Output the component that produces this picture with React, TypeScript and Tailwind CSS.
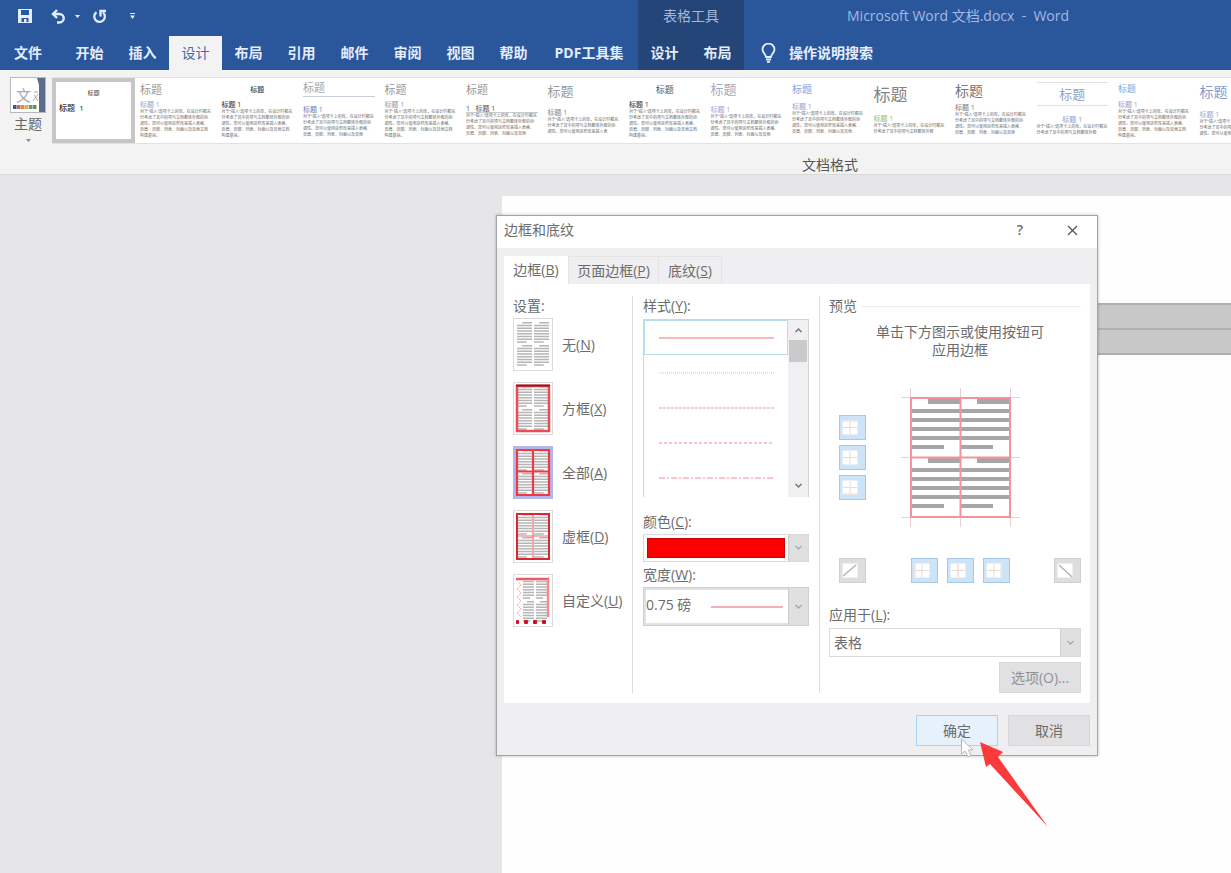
import type { ReactNode } from 'react';

const font = "font-['Open_Sans','Noto_Sans_CJK_SC',sans-serif]";

const BODY =
  '对于“插入”选项卡上的库，在设计时都充分考虑了其中的项与文档整体外观的协调性。您可以使用这些库来插入表格、页眉、页脚、列表、封面以及其他文档构建基块。';

type Style = { title: string; heading: string; label?: string; lines: number };

const STYLES: Style[] = [
  { title: 'h-[22px] text-[11px] text-[#999]', heading: 'text-[#8fa5d1]', lines: 5 },
  { title: 'h-[22px] text-[7px] text-[#444] justify-center font-medium', heading: 'text-[#444] font-medium', lines: 5 },
  { title: 'h-[19px] text-[11px] text-[#a5a5a5] border-b border-[#c9cede] mb-2', heading: 'text-[#5f80be]', lines: 4 },
  { title: 'h-[22px] text-[11px] text-[#999]', heading: 'text-[#999]', lines: 5 },
  { title: 'h-[22px] text-[11px] text-[#999] mb-1', heading: 'text-[#555] border-b border-[#ccc]', label: '1   标题 1', lines: 4 },
  { title: 'h-[26px] text-[13px] text-[#999] mb-1', heading: 'text-[#888]', lines: 3 },
  { title: 'h-[22px] text-[9px] text-[#555] justify-center', heading: 'text-[#444] font-medium', lines: 5 },
  { title: 'h-[22px] text-[13px] text-[#a5aabd] mb-[5px]', heading: 'text-[#a9a0d1]', lines: 4 },
  { title: 'h-[22px] text-[10px] text-[#7fa4e2] mb-[2px]', heading: 'text-[#9c9cd0]', lines: 4 },
  { title: 'h-[32px] text-[17px] text-[#858585] mb-1', heading: 'text-[#8fc173]', lines: 2 },
  { title: 'h-[25px] text-[14px] text-[#777]', heading: 'text-[#777]', lines: 4 },
  { title: 'h-[24px] text-[13px] text-[#979fc4] justify-center mt-1 mb-[9px] border-y border-[#e2e2e2]', heading: 'text-[#979cd0] justify-center', lines: 2 },
  { title: 'h-[20px] text-[9px] text-[#7fa4d4] mb-[2px]', heading: 'text-[#9c9cd0]', lines: 5 },
  { title: 'h-[28px] text-[14px] text-[#8a9acb] mb-1', heading: 'text-[#9cabd0]', lines: 3 },
];

function StyleThumb({ title, heading, label, lines }: Style) {
  return (
    <button className="flex h-[65px] flex-col px-[5px] text-left">
      <span className={`flex w-full items-center leading-none ${title}`}>标题</span>
      <span className={`flex h-[9px] w-full items-center text-[7px] leading-none whitespace-pre ${heading}`}>{label ?? '标题 1'}</span>
      <span className="text-[4px] leading-[6px] text-[#666]">{BODY.slice(0, lines * 17)}</span>
    </button>
  );
}

function Tab({ children, active }: { children: ReactNode; active?: boolean }) {
  return (
    <button
      className={`h-[34px] w-[53px] shrink-0 text-center text-sm ${active ? 'bg-[#f3f3f4] text-[#4a67a8]' : 'font-bold text-[#e4edfb]'}`}
    >
      {children}
    </button>
  );
}

function Chevron({ up }: { up?: boolean }) {
  return (
    <svg width="9" height="6" viewBox="0 0 9 6" className={up ? 'rotate-180' : ''} fill="none" stroke="currentColor" strokeWidth="1.5">
      <path d="M1.500 1l3 3 3-3" />
    </svg>
  );
}

/* Grey text lines of a page with two columns and two blocks. */
function PageLines({ x = 4, w = 32, color = '#b5b5b5' }: { x?: number; w?: number; color?: string }) {
  const half = w / 2 - 1;
  const lines: ReactNode[] = [];
  [4, 27].forEach((top) => {
    for (let i = 0; i < 8; i++) {
      const y = top + i * 2.75;
      [x, x + half + 2].forEach((cx) => {
        const start = i === 0 ? cx + half * 0.35 : cx;
        const len = i === 0 || i === 7 ? half * 0.65 : half;
        lines.push(<rect key={`${y}-${cx}`} x={start} y={y} width={len} height="1.5" fill={color} />);
      });
    }
  });
  return <>{lines}</>;
}

type Kind = 'none' | 'box' | 'all' | 'grid' | 'custom';

function SettingIcon({ kind }: { kind: Kind }) {
  return (
    <svg width="40" height="53" viewBox="0 0 40 53">
      <rect x="0.5" y="0.5" width="39" height="52" fill="#fff" stroke="#dcdada" />
      {kind === 'all' && <rect x="1.5" y="1.5" width="37" height="50" fill="#fff" stroke="#b4b6e8" strokeWidth="3" />}
      {kind === 'custom' ? <PageLines x={10} w={24} /> : <PageLines />}
      {kind === 'box' && <rect x="4" y="4" width="32" height="45" fill="none" stroke="#ee4a55" strokeWidth="2.5" />}
      {kind === 'box' && <path d="M3 3.500h34" stroke="#8f1720" strokeWidth="2" />}
      {kind === 'all' && (
        <path d="M4 4h32v45H4zM20 4v45M4 25.500h32" fill="none" stroke="#ee3a47" strokeWidth="2.200" />
      )}
      {kind === 'grid' && (
        <>
          <path d="M20 4v45M4 26h32" stroke="#f26a72" strokeWidth="1.200" />
          <rect x="4" y="4" width="32" height="45" fill="none" stroke="#d92733" strokeWidth="2" />
        </>
      )}
      {kind === 'custom' && (
        <>
          <path d="M3 5h33" stroke="#ee5a64" strokeWidth="2.500" />
          <path d="M35 5v38" stroke="#f58a90" strokeWidth="2.500" />
          <path d="M4 7l4 4-4 4 4 4-4 4 4 4-4 4 4 4-4 4 4 4" fill="none" stroke="#f9bcc0" />
          {[3, 11, 20, 29].map((x) => (
            <rect key={x} x={x} y="46" width={x === 3 ? 3 : 4} height="4" rx="1" fill="#cf1020" />
          ))}
        </>
      )}
    </svg>
  );
}

const SETTINGS: { kind: Kind; name: string; key: string }[] = [
  { kind: 'none', name: '无', key: 'N' },
  { kind: 'box', name: '方框', key: 'X' },
  { kind: 'all', name: '全部', key: 'A' },
  { kind: 'grid', name: '虚框', key: 'D' },
  { kind: 'custom', name: '自定义', key: 'U' },
];

const LINES = [
  { name: '实线', dash: '', color: '#f8b9bd' },
  { name: '圆点', dash: '1 1', color: '#fbd8da' },
  { name: '短划线', dash: '3 1', color: '#fac9cc' },
  { name: '划线', dash: '3 2', color: '#fac4c8' },
  { name: '点划线', dash: '6 2 2 2', color: '#fac4c8' },
];

type Edge = 'top' | 'middle' | 'bottom' | 'left' | 'center' | 'right' | 'up' | 'down';

const EDGES: Record<Edge, string> = {
  top: 'M4 6h14',
  middle: 'M4 12.500h14',
  bottom: 'M4 19h14',
  left: 'M4 6v13',
  center: 'M11 6v13',
  right: 'M18 6v13',
  up: 'M4 18L17 7',
  down: 'M5 7l13 12',
};

function EdgeButton({ edge, name }: { edge: Edge; name: string }) {
  const off = edge === 'up' || edge === 'down';
  return (
    <button
      aria-label={name}
      disabled={off}
      className={`h-[25px] w-[27px] border ${off ? 'border-[#d0d0d0] bg-[#dedede]' : 'border-[#a9c8e6] bg-[#cce3f8]'}`}
    >
      <svg width="25" height="23" viewBox="1 1 25 23">
        <rect x="3.500" y="5.500" width="15" height="14" fill="#fff" />
        {off ? (
          <path d={EDGES[edge]} stroke="#b5b5b5" strokeWidth="1.500" />
        ) : (
          <>
            <path d="M11 6v13M4 12.500h14" stroke="#e6dcd8" />
            <path d={EDGES[edge]} stroke="#f8d6cf" />
          </>
        )}
      </svg>
    </button>
  );
}

function Preview() {
  return (
    <svg width="120" height="140" viewBox="0 0 120 140" role="img" aria-label="边框预览">
      <path d="M10.500 1v139M60.500 1v139M110.500 1v139M1 10.500h119M1 70.500h119M1 130.500h119" stroke="#e6cfd5" />
      <path d="M12 13h97v116H12z" fill="#fff" />
      {[0, 59].map((top) =>
        [12, 61].map((x) => (
          <g key={`${top}-${x}`} fill="#a6a6a6">
            <rect x={x + 16} y={12 + top} width="32" height="5" />
            {[22, 31, 40, 49].map((y) => (
              <rect key={y} x={x} y={y + top} width="48" height="4" />
            ))}
            <rect x={x} y={58 + top} width="32" height="4" />
          </g>
        )),
      )}
      <path d="M11 11h99v119H11zM60.500 11v119M11 70.500h99" fill="none" stroke="#f3939a" strokeWidth="2" />
    </svg>
  );
}

function Dialog() {
  return (
    <section
      role="dialog"
      aria-labelledby="dialog-title"
      className="absolute top-10 left-[496px] w-[602px] border border-[#a3a3a5] bg-[#efeef0] text-sm leading-5 text-[#6c6c6c] shadow-[0_0_3px_rgba(0,0,0,0.25)]"
    >
      <header className="flex h-8 items-center bg-white pb-1 pl-[7px]">
        <h1 id="dialog-title" className="flex-1">边框和底纹</h1>
        <button aria-label="帮助" className="w-[46px] font-semibold">?</button>
        <button aria-label="关闭" className="ml-1 flex h-7 w-[50px] items-center justify-center">
          <svg width="11" height="11" viewBox="0 0 11 11" stroke="#555" strokeWidth="1.300">
            <path d="M1 1l9 9M10 1l-9 9" />
          </svg>
        </button>
      </header>

      <div className="px-[7px] pt-2">
        <div role="tablist" className="flex">
          <button role="tab" aria-selected="true" className="h-7 w-16 bg-white">边框(<u>B</u>)</button>
          <button role="tab" aria-selected="false" className="h-7 w-[91px] border border-b-0 border-[#e4e3e5]">页面边框(<u>P</u>)</button>
          <button role="tab" aria-selected="false" className="h-7 w-[63px] border border-b-0 border-l-0 border-[#e4e3e5]">底纹(<u>S</u>)</button>
        </div>

        <div className="flex bg-white px-[9px] pt-3 pb-[10px]">
          <fieldset className="w-[120px] border-r border-[#dcdcdc]">
            <legend className="float-left mb-[2px] w-full">设置:</legend>
            <div className="clear-both flex flex-col gap-[11px]">
              {SETTINGS.map((s) => (
                <label key={s.kind} className="flex items-center gap-[9px]">
                  <input type="radio" name="setting" defaultChecked={s.kind === 'all'} className="sr-only" />
                  <SettingIcon kind={s.kind} />
                  <span>{s.name}(<u>{s.key}</u>)</span>
                </label>
              ))}
            </div>
          </fieldset>

          <div className="w-[187px] border-r border-[#dcdcdc] px-[10px]">
            <div id="style-label">样式(<u>Y</u>):</div>
            <div className="mt-[3px] flex h-[178px] border border-b-0 border-[#d4d4d6]">
              <div role="listbox" aria-labelledby="style-label" className="flex flex-1 flex-col">
                {LINES.map((l, i) => (
                  <button
                    key={l.name}
                    role="option"
                    aria-label={l.name}
                    aria-selected={i === 0}
                    className={`flex h-[35px] items-center justify-center border ${i === 0 ? 'border-[#b9dcee]' : 'border-transparent'}`}
                  >
                    <svg width="115" height="2">
                      <path d="M0 1h115" stroke={l.color} strokeWidth="2" strokeDasharray={l.dash} />
                    </svg>
                  </button>
                ))}
              </div>
              <div className="flex w-5 flex-col items-center bg-[#f0eff1] text-[#777]">
                <button aria-label="向上滚动" className="flex h-5 w-full items-center justify-center"><Chevron up /></button>
                <div className="h-[22px] w-[18px] bg-[#cacaca]" />
                <button aria-label="向下滚动" className="mt-auto flex h-[22px] w-full items-center justify-center"><Chevron /></button>
              </div>
            </div>

            <label htmlFor="color" className="mt-[15px] block">颜色(<u>C</u>):</label>
            <div className="mt-[2px] grid h-7 grid-cols-[1fr_20px] border border-[#dadada]">
              <select id="color" className="col-span-2 col-start-1 row-start-1 appearance-none text-transparent outline-none">
                <option value="red" aria-label="红色" />
              </select>
              <span className="pointer-events-none col-start-1 row-start-1 m-[3px] border border-[#c00] bg-[#fe0000]" />
              <span className="pointer-events-none col-start-2 row-start-1 flex items-center justify-center border-l border-[#ccc] bg-[#e1e0e1] text-[#aaa]"><Chevron /></span>
            </div>

            <label htmlFor="width" className="mt-[3px] block">宽度(<u>W</u>):</label>
            <div className="mt-[2px] grid h-[39px] grid-cols-[1fr_20px] border border-[#cfcfd0]">
              <select id="width" className="col-span-2 col-start-1 row-start-1 appearance-none border-2 border-[#e2e2e4] pr-5 pb-1 outline-none">
                <option>0.75 磅</option>
              </select>
              <svg className="pointer-events-none col-start-1 row-start-1 mr-[5px] self-center justify-self-end" width="72" height="2">
                <path d="M0 1h72" stroke="#f6b0b5" strokeWidth="2" />
              </svg>
              <span className="pointer-events-none col-start-2 row-start-1 flex items-center justify-center border-l border-[#ccc] bg-[#e1e0e1] text-[#aaa]"><Chevron /></span>
            </div>
          </div>

          <div className="flex flex-1 flex-col pl-[9px]">
            <div className="flex items-center gap-1">
              <h2>预览</h2>
              <span className="h-px flex-1 bg-[#ececec]" />
            </div>
            <p className="mt-[7px] pr-8 pl-[42px] text-center leading-[18px]">单击下方图示或使用按钮可应用边框</p>
            <div className="mt-7 flex items-center pl-[10px]">
              <div className="flex flex-col gap-[5px]">
                <EdgeButton edge="top" name="上框线" />
                <EdgeButton edge="middle" name="内部横框线" />
                <EdgeButton edge="bottom" name="下框线" />
              </div>
              <div className="ml-[34px]"><Preview /></div>
            </div>
            <div className="mt-[31px] flex justify-between pl-[10px]">
              <EdgeButton edge="up" name="斜上框线" />
              <div className="flex gap-[9px]">
                <EdgeButton edge="left" name="左框线" />
                <EdgeButton edge="center" name="内部竖框线" />
                <EdgeButton edge="right" name="右框线" />
              </div>
              <EdgeButton edge="down" name="斜下框线" />
            </div>
            <label htmlFor="apply" className="mt-[22px]">应用于(<u>L</u>):</label>
            <div className="mt-[3px] grid h-[29px] grid-cols-[1fr_20px] border border-[#dadada]">
              <select id="apply" className="col-span-2 col-start-1 row-start-1 appearance-none px-1 outline-none">
                <option>表格</option>
              </select>
              <span className="pointer-events-none col-start-2 row-start-1 flex items-center justify-center border-l border-[#d0d0d0] bg-[#e1e0e1] text-[#aaa]"><Chevron /></span>
            </div>
            <button disabled className="mt-[5px] h-[31px] w-[82px] self-end border border-[#d8d7d9] bg-[#e1e0e2] text-[#929292]">选项(O)...</button>
          </div>
        </div>
      </div>

      <footer className="flex justify-end gap-[10px] px-[7px] pt-3 pb-[9px]">
        <button className="h-[31px] w-[82px] border border-[#a9d3f2] bg-[#e6f1fb]">确定</button>
        <button className="h-[31px] w-[82px] border border-[#d6d5d7] bg-[#e1e0e2]">取消</button>
      </footer>

      <svg className="pointer-events-none absolute top-[520px] left-[460px]" width="96" height="96" viewBox="0 0 96 96" aria-hidden="true">
        <path d="M4.500 3v15l3.500-3 3 6 3-1.500-2.500-5.500H16z" fill="#fff" stroke="#b5b5b8" />
        <path d="M23 6l23 10-5 5 50 70L33 28l-4 3z" fill="#fb3b3b" />
      </svg>
    </section>
  );
}

export default function App() {
  return (
    <div className={`flex min-h-screen flex-col overflow-hidden bg-[#e6e6e8] ${font}`}>
      <header className="flex h-[70px] shrink-0 bg-[#2a569b] whitespace-nowrap">
        <div className="flex shrink-0 flex-col">
          <div className="flex h-9 shrink-0 items-center pb-1 pl-[18px] text-[#e4edfb]">
            <button aria-label="保存">
              <svg width="14" height="14" viewBox="0 0 14 14">
                <path d="M0 0h14v14H0z" fill="currentColor" />
                <path d="M3 1h8v5H3zM3.500 9h7v4h-7z" fill="#2a569b" />
                <path d="M6 10h2.500v4H6z" fill="currentColor" />
              </svg>
            </button>
            <button aria-label="撤消" className="ml-[19px]">
              <svg width="15" height="15" viewBox="0 0 15 15" fill="none" stroke="currentColor" strokeWidth="2.400">
                <path d="M6 1L2 5l4 4M2 5h6.500a4 4 0 010 8.500H6" />
              </svg>
            </button>
            <button aria-label="撤消选项" className="ml-[9px]">
              <svg width="5" height="3" viewBox="0 0 5 3"><path d="M0 0h5L2.500 3z" fill="currentColor" /></svg>
            </button>
            <button aria-label="恢复" className="ml-3">
              <svg width="15" height="15" viewBox="0 0 15 15" fill="none" stroke="currentColor" strokeWidth="2.300">
                <path d="M4.500 3.200A5.300 5.300 0 1011 3.500" />
                <path d="M8.500 7.500V2H14" />
              </svg>
            </button>
            <button aria-label="自定义快速访问工具栏" className="ml-[23px]">
              <svg width="5" height="6" viewBox="0 0 5 6"><path d="M0 0h5v1H0zM0 2.500h5L2.500 6z" fill="currentColor" /></svg>
            </button>
          </div>
          <nav className="flex">
            <button className="mr-[7px] h-[34px] w-14 text-sm font-bold text-[#e4edfb]">文件</button>
            <Tab>开始</Tab>
            <Tab>插入</Tab>
            <Tab active>设计</Tab>
            <Tab>布局</Tab>
            <Tab>引用</Tab>
            <Tab>邮件</Tab>
            <Tab>审阅</Tab>
            <Tab>视图</Tab>
            <Tab>帮助</Tab>
            <button className="h-[34px] w-[98px] text-sm font-bold text-[#e4edfb]">PDF工具集</button>
          </nav>
        </div>
        <div className="shrink-0 bg-[#234578]">
          <div className="flex h-9 items-center justify-center pb-1 text-sm text-[#a3b7db]">表格工具</div>
          <div className="flex">
            <Tab>设计</Tab>
            <Tab>布局</Tab>
          </div>
        </div>
        <div className="flex-1">
          <div className="flex h-9 items-center pb-1 pl-[103px] text-sm whitespace-pre text-[#a3bae4]">Microsoft Word 文档.docx  -  Word</div>
          <button className="flex h-[34px] items-center gap-[13px] pl-[17px] text-sm font-bold text-[#e4edfb]">
            <svg width="15" height="20" viewBox="0 0 15 20" fill="none" stroke="currentColor" strokeWidth="1.800">
              <path d="M5 14c0-3-3.500-4-3.500-7.500a6 6 0 0112 0C13.500 10 10 11 10 14z" />
              <path d="M5 16.500h5M6 18.800h3" />
            </svg>
            操作说明搜索
          </button>
        </div>
      </header>

      <section aria-label="设计" className="flex h-[105px] shrink-0 overflow-hidden border-b border-[#dadadb] bg-[#f3f3f3] pt-[7px]">
        <button className="flex w-[52px] shrink-0 flex-col items-center pl-1 text-sm text-[#666]">
          <svg width="36" height="36" viewBox="0 0 36 36">
            <rect x="0.500" y="0.500" width="35" height="35" fill="#fff" stroke="#b8b8bd" />
            <path d="M27 1h8v34h-6V8z" fill="#5a6d8c" />
            <text x="6" y="24" fontSize="15" fill="#a5a9b8">文</text>
            <path d="M24 15h4M23 24l5-7M24 18l4 6" stroke="#a5a9b8" fill="none" />
            {['#3557a5', '#d9604c', '#e08a3c', '#e0b43c', '#4aa0a8', '#5a9a4a'].map((c, i) => (
              <rect key={c} x={3 + i * 4} y="28" width="3.500" height="4" fill={c} />
            ))}
          </svg>
          <span className="leading-[22px]">主题</span>
          <svg className="mt-1" width="5" height="3" viewBox="0 0 5 3"><path d="M0 0h5L2.500 3z" fill="#888" /></svg>
        </button>
        <div className="min-w-0 flex-1">
          <div className="flex h-[67px] items-center overflow-hidden border-y border-[#e2e2e4] bg-white">
            <button className="flex h-[65px] w-[83px] shrink-0 flex-col border-4 border-[#c6c6c6] px-[3px] text-left leading-none text-[#333]">
              <span className="flex h-[22px] w-full items-center justify-center text-[6px]">标题</span>
              <span className="text-[8px] font-medium whitespace-pre">标题  1</span>
            </button>
            <div className="grid w-[1141px] shrink-0 grid-cols-14">
              {STYLES.map((s, i) => (
                <StyleThumb key={i} {...s} />
              ))}
            </div>
          </div>
          <div className="mt-[10px] pl-[750px] text-sm leading-[22px] text-[#555]">文档格式</div>
        </div>
      </section>

      <main className="relative flex flex-1 flex-col">
        <div className="mt-[21px] ml-[502px] flex-1 bg-[#fefefe] pt-[107px]">
          <table className="ml-[90px] w-[calc(100%-90px)] border-collapse bg-[#c8c8c8]">
            <tbody>
              <tr className="h-[25px]"><td className="border-y-2 border-[#b0b0b0]" /></tr>
              <tr className="h-[25px]"><td className="border-y-2 border-[#b0b0b0]" /></tr>
            </tbody>
          </table>
        </div>
        <Dialog />
      </main>
    </div>
  );
}
